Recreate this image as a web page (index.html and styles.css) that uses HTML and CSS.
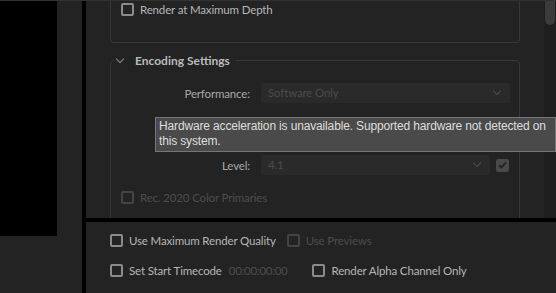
FILE: index.html
```html
<!DOCTYPE html>
<html lang="en">
<head>
    <meta charset="UTF-8">
    <title>Export Settings</title>
    <link rel="stylesheet" href="styles.css">
</head>
<body>
    <div class="app">
        <div class="side">
            <div class="preview"></div>
        </div>
        <div class="main">
            <div class="scroll-area">
                <div class="content">
                    <div class="group group-top">
                        <label class="check"><span class="box"></span>Render at Maximum Depth</label>
                    </div>

                    <fieldset class="group group-enc">
                        <legend><span class="chev"></span>Encoding Settings</legend>

                        <div class="row">
                            <span class="row-label">Performance:</span>
                            <div class="select">Software Only<span class="arrow"></span></div>
                        </div>
                        <!-- row hidden behind the tooltip -->
                        <div class="row row-hidden"></div>
                        <div class="row">
                            <span class="row-label">Level:</span>
                            <div class="select select-short">4.1<span class="arrow"></span></div>
                            <span class="box box-checked">
                                <svg width="9" height="8" viewBox="0 0 9 8"><path d="M1 4.2 L3.4 6.5 L8 1.3" fill="none" stroke="#262626" stroke-width="2"/></svg>
                            </span>
                        </div>
                        <label class="check disabled rec"><span class="box"></span>Rec. 2020 Color Primaries</label>

                        <div class="tooltip">Hardware acceleration is unavailable. Supported hardware not detected on this system.</div>
                    </fieldset>
                </div>
                <div class="scrollbar"><div class="thumb"></div></div>
            </div>

            <div class="bottom">
                <div class="bottom-row">
                    <label class="check"><span class="box"></span>Use Maximum Render Quality</label>
                    <label class="check disabled previews"><span class="box"></span>Use Previews</label>
                </div>
                <div class="bottom-row">
                    <label class="check"><span class="box"></span>Set Start Timecode</label>
                    <span class="timecode">00:00:00:00</span>
                    <label class="check alpha"><span class="box"></span>Render Alpha Channel Only</label>
                </div>
            </div>
        </div>
    </div>
</body>
</html>
```

FILE: styles.css
```css
html, body {
    margin: 0;
    padding: 0;
    background-color: #232323;
}

body {
    font-family: 'Lato', 'Open Sans', sans-serif;
    font-size: 11.5px;
    letter-spacing: -0.15px;
    color: #b4b7ba;
    width: 556px;
    height: 293px;
    overflow: hidden;
}

.app {
    display: flex;
    height: 293px;
    border-top: 1px solid #323232;
    box-sizing: border-box;
}

.side {
    width: 82px;
    flex-shrink: 0;
    background-color: #232323;
    border-right: 4px solid #000;
}

.preview {
    width: 57px;
    height: 235px;
    background-color: #000;
}

.main {
    flex: 1;
    min-width: 0;
    display: flex;
    flex-direction: column;
}

.scroll-area {
    height: 224px;
    display: flex;
    border-bottom: 4px solid #000;
    overflow: hidden;
}

.content {
    flex: 1;
    min-width: 0;
    padding: 0 24px;
}

.scrollbar {
    width: 12px;
    flex-shrink: 0;
    background-color: #1e1e1e;
}

.thumb {
    width: 10px;
    height: 24px;
    margin-left: 1px;
    background-color: #3b3b3b;
    border-radius: 0 0 5px 5px;
}

.group {
    border: 1px solid #383838;
    border-radius: 4px;
    margin: 0;
    min-width: 0;
}

.group-top {
    border-top: none;
    border-radius: 0 0 4px 4px;
    height: 42px;
    padding: 1px 0 0 10px;
    box-sizing: border-box;
}

.group-enc {
    position: relative;
    margin-top: 10px;
    padding: 0 9px 20px 10px;
}

legend {
    font-size: 12px;
    letter-spacing: 0;
    font-weight: bold;
    color: #b9bcbf;
    padding: 0 6px 0 0;
    margin-left: -7px;
    display: flex;
    align-items: center;
}

.chev {
    width: 5px;
    height: 5px;
    border-right: 1px solid #8a8a8a;
    border-bottom: 1px solid #8a8a8a;
    transform: rotate(45deg);
    margin: -4px 12px 0 3px;
}

.check {
    display: flex;
    align-items: center;
    height: 14px;
}

.box {
    width: 9px;
    height: 9px;
    border: 2px solid #8b8b8b;
    border-radius: 2px;
    margin-right: 6px;
    flex-shrink: 0;
}

.disabled {
    color: #4d4d4d;
}

.disabled .box {
    border-color: #444;
}

.row {
    display: flex;
    align-items: center;
    height: 20px;
    margin-top: 16px;
}

.row:first-of-type {
    margin-top: 15px;
}

.row-label {
    width: 129px;
    flex-shrink: 0;
    text-align: right;
    padding-right: 11px;
    color: #a8a8a8;
}

.select {
    flex: 1;
    min-width: 0;
    height: 20px;
    line-height: 20px;
    background-color: #2a2a2a;
    border-radius: 2px;
    padding-left: 7px;
    color: #4a4a4a;
    position: relative;
}

.select-short {
    flex: none;
    width: 222px;
}

.arrow {
    position: absolute;
    right: 10px;
    top: 5px;
    width: 5px;
    height: 5px;
    border-right: 1px solid #4e4e4e;
    border-bottom: 1px solid #4e4e4e;
    transform: rotate(45deg);
}

.box-checked {
    width: 13px;
    height: 13px;
    border: none;
    background-color: #4a4a4a;
    margin: 0 0 0 6px;
    display: flex;
    align-items: center;
    justify-content: center;
}

.rec {
    margin-top: 15px;
}

.tooltip {
    position: absolute;
    left: 44px;
    top: 49px;
    width: 393px;
    padding: 1px 3px 2px 3px;
    background-color: #4a4a4a;
    border: 1px solid #767676;
    color: #dedede;
    font-family: 'Liberation Sans', sans-serif;
    font-size: 12px;
    letter-spacing: -0.15px;
    line-height: 15px;
}

.bottom {
    flex: 1;
    padding: 11px 0 0 24px;
}

.bottom-row {
    display: flex;
    align-items: center;
    height: 14px;
    margin-bottom: 16px;
}

.previews {
    margin-left: 11px;
}

.timecode {
    color: #4d4d4d;
    margin-left: 7px;
    letter-spacing: -0.3px;
}

.alpha {
    margin-left: 25px;
}
```
